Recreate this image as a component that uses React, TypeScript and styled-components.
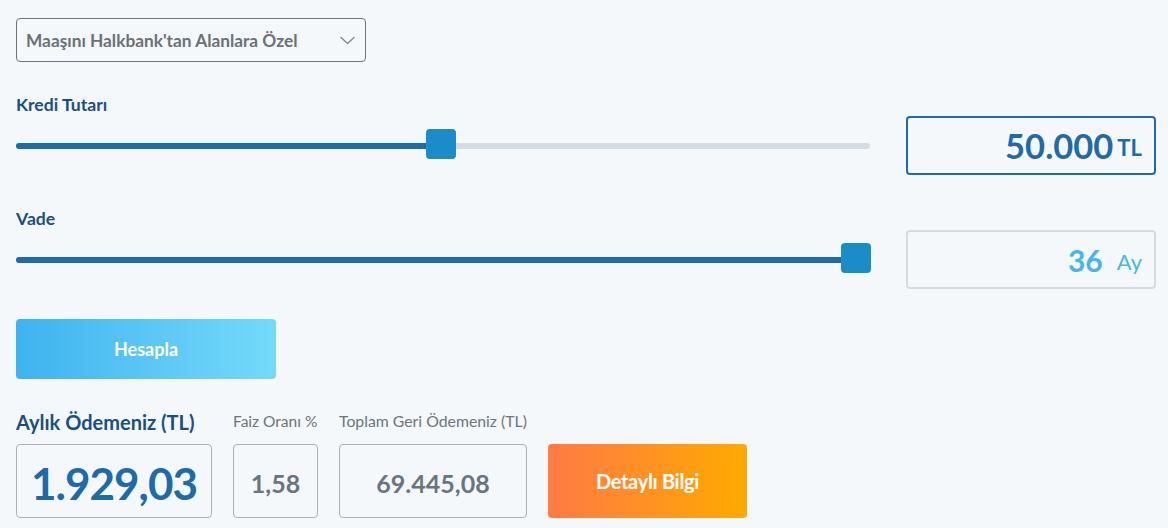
import styled, { createGlobalStyle } from 'styled-components';

const GlobalStyle = createGlobalStyle`
  body {
    margin: 0;
    background: #f4f8fb;
    font-family: 'Lato', 'Noto Sans', sans-serif;
  }
`;

const Page = styled.div`
  padding: 18px 12px 0 16px;
  width: 1168px;
  height: 528px;
  box-sizing: border-box;
  overflow: hidden;
`;

const Select = styled.div`
  width: 350px;
  height: 44px;
  box-sizing: border-box;
  border: 1px solid #6c757d;
  border-radius: 4px;
  display: flex;
  align-items: center;
  justify-content: space-between;
  padding: 0 10px 0 9px;
  color: #6b7177;
  font-size: 17.3px;
  font-weight: 700;
  background: #f4f8fb;
`;

const SliderGrid = styled.div`
  display: grid;
  grid-template-columns: 1fr 250px;
  column-gap: 36px;
  margin-top: 32px;
`;

const Label = styled.div<{ $top?: number }>`
  grid-column: 1 / 3;
  margin-top: ${(p) => p.$top ?? 0}px;
  height: 22px;
  line-height: 22px;
  font-size: 17.6px;
  font-weight: 700;
  color: #1b4f82;
`;

const SliderWrap = styled.div`
  display: flex;
  align-items: center;
  height: 59px;
`;

const Track = styled.div`
  position: relative;
  width: 100%;
  height: 6px;
  background: #d5dce2;
  border-radius: 3px;
`;

const Fill = styled.div`
  height: 100%;
  background: #1e6bab;
  border-radius: 3px 0 0 3px;
`;

const Thumb = styled.div`
  position: absolute;
  top: 50%;
  width: 30px;
  height: 30px;
  margin-left: -15px;
  transform: translateY(calc(-50% - 2px));
  background: #1a8cc8;
  border-radius: 4px;
`;

const ValueBox = styled.div<{ $active?: boolean }>`
  height: 59px;
  box-sizing: border-box;
  border: ${(p) => (p.$active ? '2px solid #1f6aa8' : '2px solid #d6dbdf')};
  border-radius: 4px;
  display: flex;
  align-items: center;
  justify-content: flex-end;
  padding-right: 12px;
  gap: ${(p) => (p.$active ? '4px' : '14px')};
  color: ${(p) => (p.$active ? '#1f6aa8' : '#47b5ec')};
  font-weight: 700;
`;

const BigNum = styled.span<{ $size: number }>`
  font-size: ${(p) => p.$size}px;
`;

const Unit = styled.span<{ $size: number; $weight?: number }>`
  font-size: ${(p) => p.$size}px;
  font-weight: ${(p) => p.$weight ?? 700};
  margin-top: 4px;
`;

const CalcButton = styled.button`
  display: block;
  margin-top: 30px;
  width: 260px;
  height: 60px;
  border: none;
  border-radius: 4px;
  background: linear-gradient(90deg, #3fb3ef 0%, #74dafa 100%);
  color: #fff;
  font-family: inherit;
  font-size: 18px;
  font-weight: 700;
`;

const Results = styled.div`
  display: flex;
  align-items: flex-end;
  gap: 21px;
  margin-top: 31px;
`;

const ResultCol = styled.div<{ $w: number }>`
  width: ${(p) => p.$w}px;
  display: flex;
  flex-direction: column;
`;

const ResultLabel = styled.div<{ $main?: boolean; $size?: number }>`
  font-size: ${(p) => (p.$main ? '20px' : `${p.$size ?? 15.5}px`)};
  font-weight: ${(p) => (p.$main ? 700 : 400)};
  color: ${(p) => (p.$main ? '#1b4f82' : '#6c757d')};
  white-space: nowrap;
  margin-bottom: ${(p) => (p.$main ? '10px' : '14px')};
`;

const ResultBox = styled.div<{ $main?: boolean }>`
  height: 74px;
  box-sizing: border-box;
  border: 1px solid #a9b0b6;
  border-radius: 4px;
  display: flex;
  align-items: center;
  justify-content: center;
  font-weight: 700;
  font-size: ${(p) => (p.$main ? '44px' : '25px')};
  color: ${(p) => (p.$main ? '#1f6aa8' : '#687580')};
  letter-spacing: ${(p) => (p.$main ? '-1px' : '0')};
  padding-top: 4px;
`;

const DetailButton = styled.button`
  width: 199px;
  height: 74px;
  border: none;
  border-radius: 4px;
  background: linear-gradient(90deg, #ff7a45 0%, #ffaa00 100%);
  color: #fff;
  font-family: inherit;
  font-size: 20px;
  font-weight: 700;
  letter-spacing: -0.3px;
`;

const Slider = ({ percent }: { percent: number }) => (
  <SliderWrap>
    <Track>
      <Fill style={{ width: `${percent}%` }} />
      <Thumb style={{ left: `${percent}%` }} />
    </Track>
  </SliderWrap>
);

const Chevron = () => (
  <svg width="15" height="9" viewBox="0 0 15 9" fill="none">
    <path d="M1 1.5 L7.5 7.5 L14 1.5" stroke="#7d858c" strokeWidth="1.3" strokeLinecap="round" strokeLinejoin="round" />
  </svg>
);

const App = () => {
  return (
    <>
      <GlobalStyle />
      <Page>
        <Select>
          <span>Maaşını Halkbank'tan Alanlara Özel</span>
          <Chevron />
        </Select>

        <SliderGrid>
          <Label>Kredi Tutarı</Label>
          <Slider percent={49.8} />
          <ValueBox $active>
            <BigNum $size={34.5}>50.000</BigNum>
            <Unit $size={22}>TL</Unit>
          </ValueBox>

          <Label $top={33}>Vade</Label>
          <Slider percent={98.4} />
          <ValueBox>
            <BigNum $size={30}>36</BigNum>
            <Unit $size={22} $weight={400}>Ay</Unit>
          </ValueBox>
        </SliderGrid>

        <CalcButton>Hesapla</CalcButton>

        <Results>
          <ResultCol $w={196}>
            <ResultLabel $main>Aylık Ödemeniz (TL)</ResultLabel>
            <ResultBox $main>1.929,03</ResultBox>
          </ResultCol>
          <ResultCol $w={85}>
            <ResultLabel $size={15.5}>Faiz Oranı %</ResultLabel>
            <ResultBox>1,58</ResultBox>
          </ResultCol>
          <ResultCol $w={188}>
            <ResultLabel $size={15.8}>Toplam Geri Ödemeniz (TL)</ResultLabel>
            <ResultBox>69.445,08</ResultBox>
          </ResultCol>
          <DetailButton>Detaylı Bilgi</DetailButton>
        </Results>
      </Page>
    </>
  );
};

export default App;
